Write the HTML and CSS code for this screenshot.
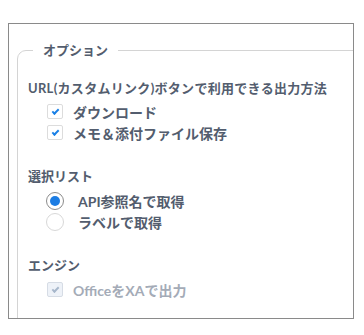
FILE: index.html
```html
<!DOCTYPE html>
<html lang="ja">

<head>
    <meta charset="UTF-8">
    <meta name="viewport" content="width=device-width, initial-scale=1.0">
    <title>オプション</title>
    <link rel="stylesheet" href="styles.css">
</head>

<body>
    <div class="panel">
        <fieldset class="options">
            <legend>オプション</legend>

            <!-- 出力方法 -->
            <div class="group">
                <div class="group-title">URL(カスタムリンク)ボタンで利用できる出力方法</div>
                <label class="option">
                    <span class="checkbox checked"></span>
                    <span class="option-text">ダウンロード</span>
                </label>
                <label class="option">
                    <span class="checkbox checked"></span>
                    <span class="option-text">メモ＆添付ファイル保存</span>
                </label>
            </div>

            <!-- 選択リスト -->
            <div class="group">
                <div class="group-title">選択リスト</div>
                <label class="option">
                    <span class="radio selected"></span>
                    <span class="option-text radio-text">API参照名で取得</span>
                </label>
                <label class="option">
                    <span class="radio"></span>
                    <span class="option-text radio-text">ラベルで取得</span>
                </label>
            </div>

            <!-- エンジン -->
            <div class="group">
                <div class="group-title">エンジン</div>
                <label class="option disabled">
                    <span class="checkbox checked"></span>
                    <span class="option-text">OfficeをXAで出力</span>
                </label>
            </div>
        </fieldset>
    </div>
</body>

</html>
```

FILE: styles.css
```css
/* Base styles */
body {
    font-family: Lato, "Noto Sans CJK JP", sans-serif;
    background-color: #fff;
    color: #535d6e;
    margin: 0;
    padding: 0;
}

/* Outer panel */
.panel {
    width: 336px;
    height: 277px;
    margin: 23px 0 0 8px;
    padding: 17px 0 0 8px;
    border: 1px solid #8a8a8a;
    overflow: hidden;
}

/* Fieldset */
.options {
    margin: 0 -20px 0 0;
    padding: 20px 0 60px 10px;
    border: 1px solid #d4d4d4;
    border-top-left-radius: 9px;
    min-width: 0;
}

.options legend {
    margin-left: 5px;
    padding: 0 10px;
    font-size: 13px;
    font-weight: bold;
    line-height: 18px;
}

/* Groups */
.group {
    margin-bottom: 24px;
}

.group-title {
    font-size: 13px;
    font-weight: bold;
    line-height: 18px;
    margin-bottom: 5px;
}

.group:first-of-type .group-title {
    margin-bottom: 4px;
    letter-spacing: 0.3px;
}

/* Option rows */
.option {
    display: flex;
    align-items: center;
    height: 21px;
    padding-left: 19px;
}

.option-text {
    font-size: 14px;
    font-weight: bold;
    margin-left: 10px;
}

.radio-text {
    margin-left: 14px;
}

/* Checkbox */
.checkbox {
    position: relative;
    width: 14px;
    height: 13px;
    border: 1px solid #dcdcdc;
    border-radius: 2px;
    background-color: #fff;
}

.checkbox.checked::after {
    content: "";
    position: absolute;
    left: 4px;
    top: 4px;
    width: 5px;
    height: 2px;
    border-left: 2px solid #1a80e6;
    border-bottom: 2px solid #1a80e6;
    transform: rotate(-45deg);
}

/* Radio */
.radio {
    position: relative;
    width: 16px;
    height: 16px;
    margin-left: -1px;
    border: 1px solid #d8d8d8;
    border-radius: 50%;
    background-color: #fff;
}

.radio.selected {
    border-color: #8c8c8c;
}

.radio.selected::after {
    content: "";
    position: absolute;
    left: 3px;
    top: 3px;
    width: 10px;
    height: 10px;
    border-radius: 50%;
    background-color: #1b7ce3;
}

/* Disabled state */
.disabled .option-text {
    color: #a4abb7;
}

.disabled .checkbox {
    background-color: #eef2f8;
    border-color: #d6dce5;
}

.disabled .checkbox.checked::after {
    border-color: #a7b7cb;
}
```
